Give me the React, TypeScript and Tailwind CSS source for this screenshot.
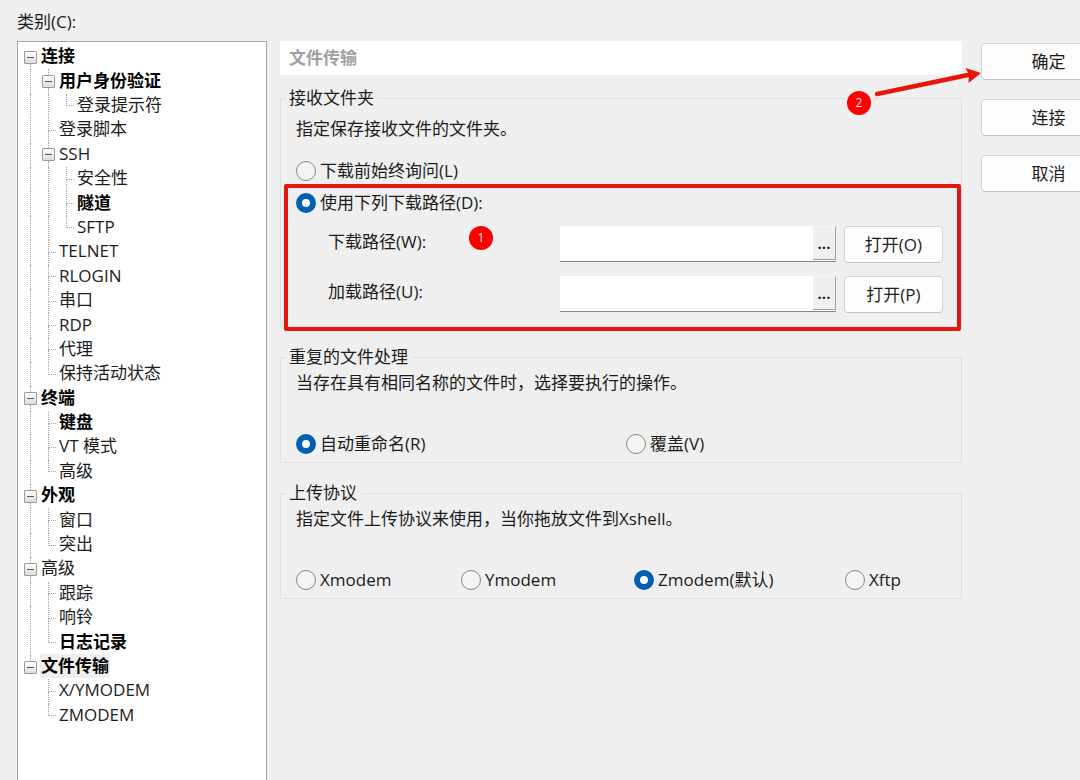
import { useState } from "react";
import type { ReactNode } from "react";

type TreeNode = { label: string; bold?: boolean; selected?: boolean; children?: TreeNode[] };

const TREE: TreeNode[] = [
  {
    label: "连接",
    bold: true,
    children: [
      { label: "用户身份验证", bold: true, children: [{ label: "登录提示符" }] },
      { label: "登录脚本" },
      { label: "SSH", children: [{ label: "安全性" }, { label: "隧道", bold: true }, { label: "SFTP" }] },
      { label: "TELNET" },
      { label: "RLOGIN" },
      { label: "串口" },
      { label: "RDP" },
      { label: "代理" },
      { label: "保持活动状态" },
    ],
  },
  { label: "终端", bold: true, children: [{ label: "键盘", bold: true }, { label: "VT 模式" }, { label: "高级" }] },
  { label: "外观", bold: true, children: [{ label: "窗口" }, { label: "突出" }] },
  { label: "高级", children: [{ label: "跟踪" }, { label: "响铃" }, { label: "日志记录", bold: true }] },
  {
    label: "文件传输",
    bold: true,
    selected: true,
    children: [{ label: "X/YMODEM" }, { label: "ZMODEM" }],
  },
];

type Row = { node: TreeNode; ancestors: boolean[]; last: boolean; first: boolean };

function flatten(nodes: TreeNode[], ancestors: boolean[] = []): Row[] {
  return nodes.flatMap((node, i) => {
    const last = i === nodes.length - 1;
    const first = i === 0 && ancestors.length === 0;
    return [
      { node, ancestors, last, first },
      ...(node.children ? flatten(node.children, [...ancestors, !last]) : []),
    ];
  });
}

const ROWS = flatten(TREE);

function Guide({ on }: { on: boolean }) {
  return (
    <span className="flex w-[18px] shrink-0 pl-2">
      {on && <span className="border-l border-dotted border-[#a6a6a6]" />}
    </span>
  );
}

function Branch({ row }: { row: Row }) {
  const line = "ml-2 flex-1 border-l border-dotted ";
  if (row.node.children) {
    return (
      <span className="flex w-[18px] shrink-0 flex-col">
        <span className={line + (row.first ? "border-transparent" : "border-[#a6a6a6]")} />
        <span className="ml-0.5 flex h-[13px] w-[13px] items-center justify-center rounded-[1px] border border-[#9c9c9c] bg-linear-to-b from-white to-[#dcdcdc]">
          <span className="h-px w-[7px] bg-[#4d5a78]" />
        </span>
        <span className={line + (row.last ? "border-transparent" : "border-[#a6a6a6]")} />
      </span>
    );
  }
  return (
    <span className="flex w-[18px] shrink-0 flex-col pr-0.5">
      <span className="ml-2 flex-1 border-b border-l border-dotted border-[#a6a6a6]" />
      <span className={line + (row.last ? "border-transparent" : "border-[#a6a6a6]")} />
    </span>
  );
}

function CategoryTree() {
  return (
    <ul
      aria-labelledby="category-label"
      className="grid h-[683px] auto-rows-fr pl-1"
    >
      {ROWS.map((row, i) => (
        <li key={i} className="flex items-stretch">
          {row.ancestors.map((on, k) => (
            <Guide key={k} on={on} />
          ))}
          <Branch row={row} />
          <span
            className={
              "mb-0.5 self-center px-px leading-6 " +
              (row.node.bold ? "font-bold text-black " : "") +
              (row.node.selected ? "bg-[#efefef]" : "")
            }
          >
            {row.node.label}
          </span>
        </li>
      ))}
    </ul>
  );
}

function Radio(props: { name: string; label: string; checked: boolean; onSelect: () => void }) {
  return (
    <label className="flex items-center gap-1 leading-6 whitespace-nowrap">
      <input
        type="radio"
        name={props.name}
        checked={props.checked}
        onChange={props.onSelect}
        className="h-5 w-5 shrink-0 appearance-none rounded-full border border-[#868686] bg-[#f4f4f4] checked:border-[6px] checked:border-[#005fb3] checked:bg-white"
      />
      {props.label}
    </label>
  );
}

function Group({ title, children }: { title: string; children: ReactNode }) {
  return (
    <fieldset className="relative min-w-0 border border-[#dfdfdf] px-[15px]">
      <legend className="-ml-[11px] px-1 leading-6">{title}</legend>
      {children}
    </fieldset>
  );
}

function PushButton({ className, children }: { className: string; children: ReactNode }) {
  return (
    <button
      type="button"
      className={
        "h-[37px] shrink-0 rounded-[4px] border border-[#d4d4d4] border-b-[#c4c4c4] bg-[#fdfdfd] leading-6 " +
        className
      }
    >
      {children}
    </button>
  );
}

function PathRow({ id, label, action }: { id: string; label: string; action: string }) {
  return (
    <div className="flex pr-[3px] pl-8">
      <label htmlFor={id} className="w-[232px] shrink-0 pt-1 leading-6">
        {label}
      </label>
      <div className="flex h-9 min-w-0 flex-1 border-b border-[#868686] bg-white">
        <input id={id} type="text" className="min-w-0 flex-1 bg-white px-2 outline-none" />
        <button
          type="button"
          aria-label={"浏览" + label}
          className="mb-px w-[23px] border-t border-r border-b border-t-[#f6f6f6] border-r-[#a0a0a0] border-b-[#a0a0a0] bg-[#efefef] text-[15px] leading-6 font-bold"
        >
          ...
        </button>
      </div>
      <PushButton className="ml-2 w-[99px]">{action}</PushButton>
    </div>
  );
}

function Badge({ className, children }: { className: string; children: ReactNode }) {
  return (
    <span
      className={
        "absolute flex h-6 w-6 items-center justify-center rounded-full bg-[#fe0000] text-[12px] text-[#ffe0e0] " +
        className
      }
    >
      {children}
    </span>
  );
}

const PROTOCOLS = ["Xmodem", "Ymodem", "Zmodem(默认)", "Xftp"];

export default function App() {
  const [target, setTarget] = useState("path");
  const [duplicate, setDuplicate] = useState("rename");
  const [protocol, setProtocol] = useState("Zmodem(默认)");

  return (
    <div className="flex h-screen overflow-hidden bg-[#efefef] pl-[17px] font-['Open_Sans','Noto_Sans_CJK_SC',sans-serif] text-[17px] text-[#1c1c1c]">
      <aside className="flex w-[250px] shrink-0 flex-col pt-[10px]">
        <span id="category-label" className="leading-6">
          类别(C):
        </span>
        <div className="mt-[7px] flex-1 border border-b-0 border-[#a3a3a3] bg-white pt-[3px]">
          <CategoryTree />
        </div>
      </aside>

      <main className="relative ml-[13px] min-w-0 flex-1 pt-[41px]">
        <h1 className="bg-white px-[9px] py-[5px] leading-6 font-bold text-[#a0a0a0]">文件传输</h1>

        <div className="mt-[11px] flex flex-col gap-[18px]">
          <Group title="接收文件夹">
            <p className="pt-[7px] leading-6">指定保存接收文件的文件夹。</p>
            <div className="mt-[18px] flex flex-col gap-2">
              <Radio
                name="target"
                label="下载前始终询问(L)"
                checked={target === "ask"}
                onSelect={() => setTarget("ask")}
              />
              <Radio
                name="target"
                label="使用下列下载路径(D):"
                checked={target === "path"}
                onSelect={() => setTarget("path")}
              />
            </div>
            <div className="mt-[11px] mb-[13px] flex flex-col gap-[13px]">
              <PathRow id="download-path" label="下载路径(W):" action="打开(O)" />
              <PathRow id="load-path" label="加载路径(U):" action="打开(P)" />
            </div>
            <div className="pointer-events-none absolute right-0 -bottom-[5px] left-[3px] h-[147px] rounded-[2px] border-4 border-[#e8150b]" />
            <Badge className="top-[116px] left-[188px]">1</Badge>
          </Group>

          <Group title="重复的文件处理">
            <p className="pt-0.5 leading-6">当存在具有相同名称的文件时，选择要执行的操作。</p>
            <div className="mt-[37px] mb-1.5 grid grid-cols-[330px_1fr]">
              <Radio
                name="duplicate"
                label="自动重命名(R)"
                checked={duplicate === "rename"}
                onSelect={() => setDuplicate("rename")}
              />
              <Radio
                name="duplicate"
                label="覆盖(V)"
                checked={duplicate === "overwrite"}
                onSelect={() => setDuplicate("overwrite")}
              />
            </div>
          </Group>

          <Group title="上传协议">
            <p className="pt-0.5 leading-6">指定文件上传协议来使用，当你拖放文件到Xshell。</p>
            <div className="mt-[37px] mb-1.5 grid grid-cols-[165px_173px_211px_1fr]">
              {PROTOCOLS.map((name) => (
                <Radio
                  key={name}
                  name="protocol"
                  label={name}
                  checked={protocol === name}
                  onSelect={() => setProtocol(name)}
                />
              ))}
            </div>
          </Group>
        </div>

        <Badge className="top-[91px] right-[91px]">2</Badge>
        <svg
          aria-hidden="true"
          width="110"
          height="34"
          viewBox="0 0 110 34"
          className="pointer-events-none absolute top-[66px] -right-[20px] z-10"
        >
          <path d="M5 28 L96 9" stroke="#ea1409" strokeWidth="4.4" strokeLinecap="round" />
          <path d="M109 7 L93.500 2 L97 8.500 L96.500 17 Z" fill="#ea1409" />
        </svg>
      </main>

      <div className="-mr-9 ml-[19px] flex w-[135px] shrink-0 flex-col gap-[19px] pt-[43px]">
        <PushButton className="w-full">确定</PushButton>
        <PushButton className="w-full">连接</PushButton>
        <PushButton className="w-full">取消</PushButton>
      </div>
    </div>
  );
}
